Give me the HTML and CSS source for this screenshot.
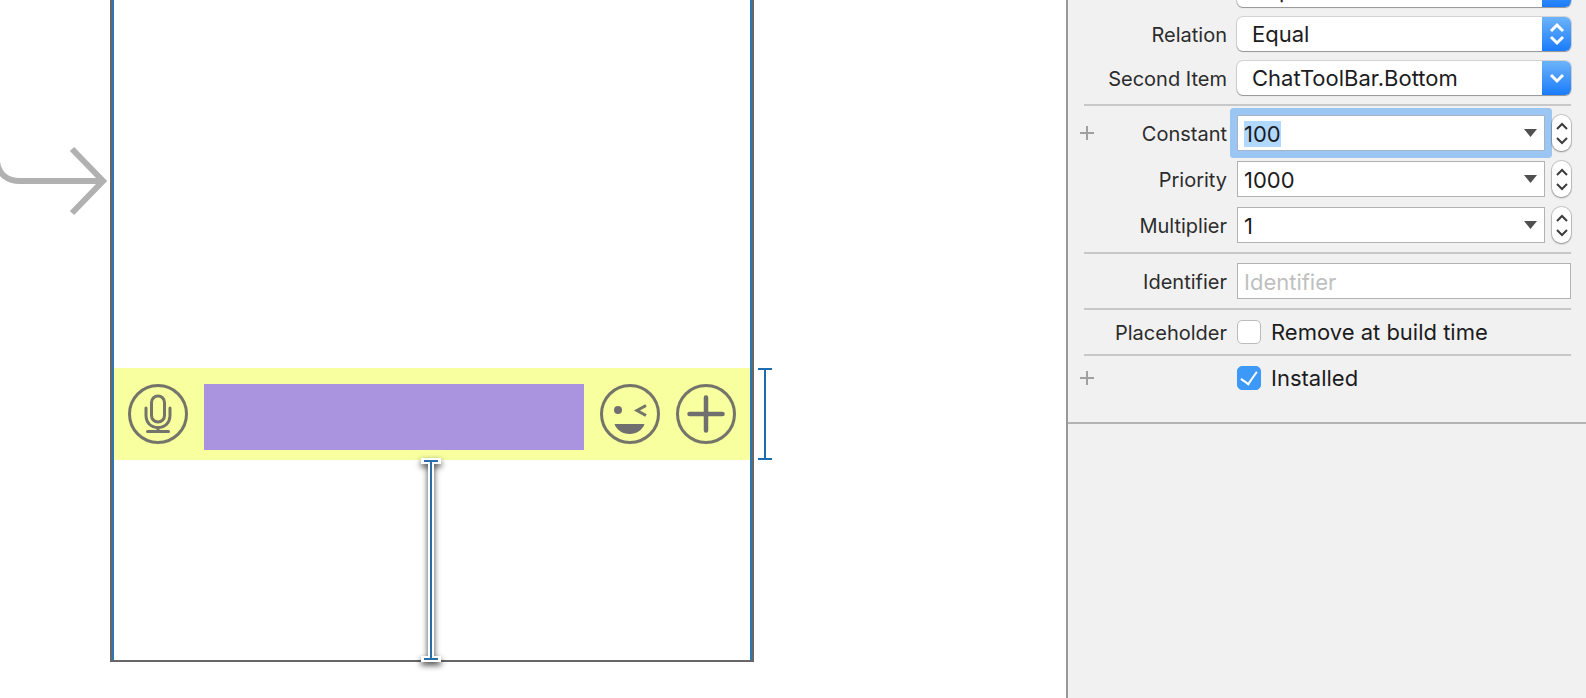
FILE: index.html
```html
<!DOCTYPE html>
<html lang="en">
<head>
    <meta charset="UTF-8">
    <meta name="viewport" content="width=device-width, initial-scale=1.0">
    <title>Constraint Inspector</title>
    <link rel="stylesheet" href="styles.css">
</head>
<body>
    <main class="canvas">
        <svg class="entry-arrow" width="110" height="80" viewBox="0 0 110 80" fill="none" stroke="#b1b1b1" stroke-width="6">
            <path d="M-3 22C-1 35 8 41 20 41H103"/>
            <path d="M72 9L103 41L72 73"/>
        </svg>

        <div class="scene">
            <div class="scene-view">
                <div class="chat-toolbar">
                    <button type="button" class="tool-btn" aria-label="Voice">
                        <svg width="60" height="60" viewBox="0 0 60 60" fill="none" stroke="#75746a" stroke-width="3" stroke-linecap="round">
                            <circle cx="30" cy="30" r="28.5"/>
                            <rect x="23.5" y="12" width="13" height="26" rx="6.5"/>
                            <path d="M18 24v7c0 8 5 12.500 12 12.500S42 39 42 31v-7M30 43.500V47M19.500 47.500h21"/>
                        </svg>
                    </button>
                    <div class="message-box"></div>
                    <button type="button" class="tool-btn" aria-label="Emoji">
                        <svg width="60" height="60" viewBox="0 0 60 60" fill="none" stroke="#75746a" stroke-width="3">
                            <circle cx="30" cy="30" r="28.500"/>
                            <circle cx="18" cy="26" r="4" fill="#706e6e" stroke="none"/>
                            <path d="M46 21.500L37 26.500L46 31.500"/>
                            <path d="M14.500 40h30c-2 6-8 10-15 10s-13-4-15-10z" fill="#706e6e" stroke="none"/>
                        </svg>
                    </button>
                    <button type="button" class="tool-btn" aria-label="More">
                        <svg width="60" height="60" viewBox="0 0 60 60" fill="none" stroke="#75746a" stroke-width="3">
                            <circle cx="30" cy="30" r="28.500"/>
                            <path d="M30 13.500v33M13.500 30h33" stroke="#706e6e" stroke-width="4.500" stroke-linecap="round"/>
                        </svg>
                    </button>
                </div>
            </div>
        </div>

        <svg class="guide-height" width="14" height="92" viewBox="0 0 14 92" fill="none" stroke="#1e6cb0" stroke-width="2">
            <path d="M0 1H14M7 1V91M0 91H14"/>
        </svg>
        <svg class="guide-bottom" width="38" height="224" viewBox="0 0 38 224" fill="none">
            <path d="M12 13H26M19 13V211M12 211H26" stroke="#fff" stroke-width="6" stroke-linecap="square"/>
            <path d="M12 13H26M19 13V211M12 211H26" stroke="#2b6da8" stroke-width="2"/>
        </svg>
    </main>

    <aside class="inspector">
        <form class="constraint-form">
            <div class="group">
                <div class="row">
                    <label for="first-item">First Item</label>
                    <div class="popup">
                        <select id="first-item"><option>Superview.Bottom</option></select>
                        <span class="popup-cap"></span>
                    </div>
                </div>
                <div class="row">
                    <label for="relation">Relation</label>
                    <div class="popup">
                        <select id="relation"><option>Equal</option></select>
                        <span class="popup-cap">
                            <svg width="16" height="24" viewBox="0 0 16 24"><path d="M2 9L8 3L14 9M2 15L8 21L14 15"/></svg>
                        </span>
                    </div>
                </div>
                <div class="row">
                    <label for="second-item">Second Item</label>
                    <div class="popup">
                        <select id="second-item"><option>ChatToolBar.Bottom</option></select>
                        <span class="popup-cap">
                            <svg width="16" height="24" viewBox="0 0 16 24"><path d="M2 9L8 15L14 9"/></svg>
                        </span>
                    </div>
                </div>
            </div>

            <div class="group">
                <div class="row">
                    <button type="button" class="add-btn" aria-label="Add constant variation">
                        <svg width="14" height="14" viewBox="0 0 14 14"><path d="M7 0V14M0 7H14"/></svg>
                    </button>
                    <label for="constant">Constant</label>
                    <div class="combo">
                        <input type="text" id="constant" value="100" autocomplete="off">
                        <button type="button" class="combo-btn" aria-label="Constant values">
                            <svg width="13" height="8" viewBox="0 0 13 8"><path d="M0 0H13L6.500 8z"/></svg>
                        </button>
                    </div>
                    <div class="stepper">
                        <button type="button" aria-label="Increase constant"><svg width="12" height="8" viewBox="0 0 12 8"><path d="M1 7L6 2L11 7"/></svg></button>
                        <button type="button" aria-label="Decrease constant"><svg width="12" height="8" viewBox="0 0 12 8"><path d="M1 1L6 6L11 1"/></svg></button>
                    </div>
                </div>
                <div class="row">
                    <label for="priority">Priority</label>
                    <div class="combo">
                        <input type="text" id="priority" value="1000" autocomplete="off">
                        <button type="button" class="combo-btn" aria-label="Priority values">
                            <svg width="13" height="8" viewBox="0 0 13 8"><path d="M0 0H13L6.500 8z"/></svg>
                        </button>
                    </div>
                    <div class="stepper">
                        <button type="button" aria-label="Increase priority"><svg width="12" height="8" viewBox="0 0 12 8"><path d="M1 7L6 2L11 7"/></svg></button>
                        <button type="button" aria-label="Decrease priority"><svg width="12" height="8" viewBox="0 0 12 8"><path d="M1 1L6 6L11 1"/></svg></button>
                    </div>
                </div>
                <div class="row">
                    <label for="multiplier">Multiplier</label>
                    <div class="combo">
                        <input type="text" id="multiplier" value="1" autocomplete="off">
                        <button type="button" class="combo-btn" aria-label="Multiplier values">
                            <svg width="13" height="8" viewBox="0 0 13 8"><path d="M0 0H13L6.500 8z"/></svg>
                        </button>
                    </div>
                    <div class="stepper">
                        <button type="button" aria-label="Increase multiplier"><svg width="12" height="8" viewBox="0 0 12 8"><path d="M1 7L6 2L11 7"/></svg></button>
                        <button type="button" aria-label="Decrease multiplier"><svg width="12" height="8" viewBox="0 0 12 8"><path d="M1 1L6 6L11 1"/></svg></button>
                    </div>
                </div>
            </div>

            <div class="group">
                <div class="row">
                    <label for="identifier">Identifier</label>
                    <div class="combo">
                        <input type="text" id="identifier" placeholder="Identifier" autocomplete="off">
                    </div>
                </div>
            </div>

            <div class="group">
                <div class="row">
                    <span class="row-title">Placeholder</span>
                    <label class="check">
                        <input type="checkbox" name="placeholder">
                        Remove at build time
                    </label>
                </div>
            </div>

            <div class="group">
                <div class="row">
                    <button type="button" class="add-btn" aria-label="Add installed variation">
                        <svg width="14" height="14" viewBox="0 0 14 14"><path d="M7 0V14M0 7H14"/></svg>
                    </button>
                    <label class="check">
                        <input type="checkbox" name="installed" checked>
                        Installed
                    </label>
                </div>
            </div>
        </form>
    </aside>

    <script>
        document.getElementById("constant").focus();
        document.getElementById("constant").select();
    </script>
</body>
</html>
```

FILE: styles.css
```css
* {
    box-sizing: border-box;
}
body {
    margin: 0;
    display: flex;
    min-height: 100vh;
    background-color: #fff;
    font-family: Inter, "Liberation Sans", sans-serif;
    font-size: 22px;
    color: #1c1c1e;
}
button {
    padding: 0;
    border: none;
    background: none;
}
svg {
    display: block;
}

/* Canvas */
.canvas {
    flex: 1;
    position: relative;
    overflow: hidden;
}
.entry-arrow {
    position: absolute;
    left: 0;
    top: 140px;
}
.scene {
    position: absolute;
    left: 110px;
    top: 0;
    width: 644px;
    height: 662px;
    border: 2px solid #676767;
    border-top: none;
}
.scene-view {
    height: 100%;
    padding-top: 368px;
    border: 2px solid #2f75b0;
    border-width: 0 2px;
}
.chat-toolbar {
    display: flex;
    align-items: flex-start;
    gap: 16px;
    height: 92px;
    padding: 16px 14px 10px;
    background-color: #f7ff9e;
}
.tool-btn {
    width: 60px;
    height: 60px;
}
.message-box {
    flex: 1;
    align-self: stretch;
    background-color: #aa94df;
}
.guide-height {
    position: absolute;
    left: 758px;
    top: 368px;
}
.guide-bottom {
    position: absolute;
    left: 412px;
    top: 448px;
    overflow: visible;
    filter: drop-shadow(0 3px 3px rgba(0, 0, 0, 0.75));
}

/* Inspector */
.inspector {
    flex: 0 0 520px;
    overflow: clip;
    border-left: 2px solid #989898;
    background-color: #f1f1f1;
}
.constraint-form {
    /* list is scrolled part way past its first row */
    margin-top: -36px;
    padding-bottom: 22px;
    border-bottom: 2px solid #b4b4b4;
}
.group {
    display: flex;
    flex-direction: column;
    gap: 10px;
    margin: 0 15px 0 16px;
    padding: 9px 0;
}
.group + .group {
    border-top: 2px solid #c8c8c8;
}
.row {
    display: grid;
    grid-template-columns: 14px 133px minmax(0, 1fr) auto;
    align-items: center;
    margin-left: -4px;
}
.row > label:not(.check),
.row-title {
    grid-column: 2;
    padding-top: 2px;
    font-size: 20px;
    text-align: right;
    color: #2c2c2c;
}
.add-btn {
    grid-column: 1;
}
.add-btn path {
    stroke: #a0a0a0;
    stroke-width: 2;
}
.popup,
.combo,
.check {
    grid-column: 3;
    margin-left: 10px;
}

.popup {
    display: flex;
    height: 34px;
    overflow: hidden;
    border-radius: 6px;
    background-color: #fff;
    box-shadow: 0 0 0 1px rgba(0, 0, 0, 0.12), 0 1px 1px rgba(0, 0, 0, 0.3);
}
.popup select {
    flex: 1;
    appearance: none;
    padding: 0 15px;
    border: none;
    background: none;
    font: inherit;
    color: inherit;
}
.popup-cap {
    display: grid;
    place-items: center;
    width: 29px;
    background: linear-gradient(#6cb3fa, #1a7cfb);
}
.popup-cap path {
    fill: none;
    stroke: #fff;
    stroke-width: 3;
}

.combo {
    display: flex;
    height: 36px;
    border: 1px solid #b2b2b2;
    background-color: #fff;
}
.combo:focus-within {
    border-color: #a5b4c4;
    border-radius: 1px;
    box-shadow: 0 0 0 7px #9bc5f2;
}
.combo input {
    flex: 1;
    min-width: 0;
    padding: 2px 6px 0;
    border: none;
    outline: none;
    background: none;
    font: inherit;
    color: inherit;
}
.combo input::placeholder {
    color: #bfbfbf;
}
.combo input::selection {
    background-color: #b1d8fd;
    color: #1c1c1e;
}
.combo-btn {
    padding: 0 7px;
}
.combo-btn path {
    fill: #505050;
}

.stepper {
    grid-column: 4;
    position: relative;
    display: flex;
    flex-direction: column;
    width: 19px;
    height: 36px;
    margin-left: 7px;
    padding: 3px 0;
    border-radius: 9px;
    background-color: #fff;
    box-shadow: 0 0 0 1px rgba(0, 0, 0, 0.16), 0 1px 2px rgba(0, 0, 0, 0.3);
}
.stepper button {
    flex: 1;
    display: grid;
    place-items: center;
}
.stepper path {
    fill: none;
    stroke: #3c3c3c;
    stroke-width: 2;
}

.check {
    display: flex;
    align-items: center;
    gap: 10px;
    height: 26px;
}
.check input {
    appearance: none;
    display: grid;
    place-items: center;
    width: 24px;
    height: 24px;
    margin: 0;
    border: 1px solid #bcbcbc;
    border-radius: 5px;
    background-color: #fff;
}
.check input:checked {
    border-color: #3d99f8;
    background-color: #3d99f8;
}
.check input:checked::before {
    content: "";
    width: 8px;
    height: 14px;
    margin-bottom: 4px;
    border: solid #fff;
    border-width: 0 2px 2px 0;
    transform: rotate(35deg);
}
```
